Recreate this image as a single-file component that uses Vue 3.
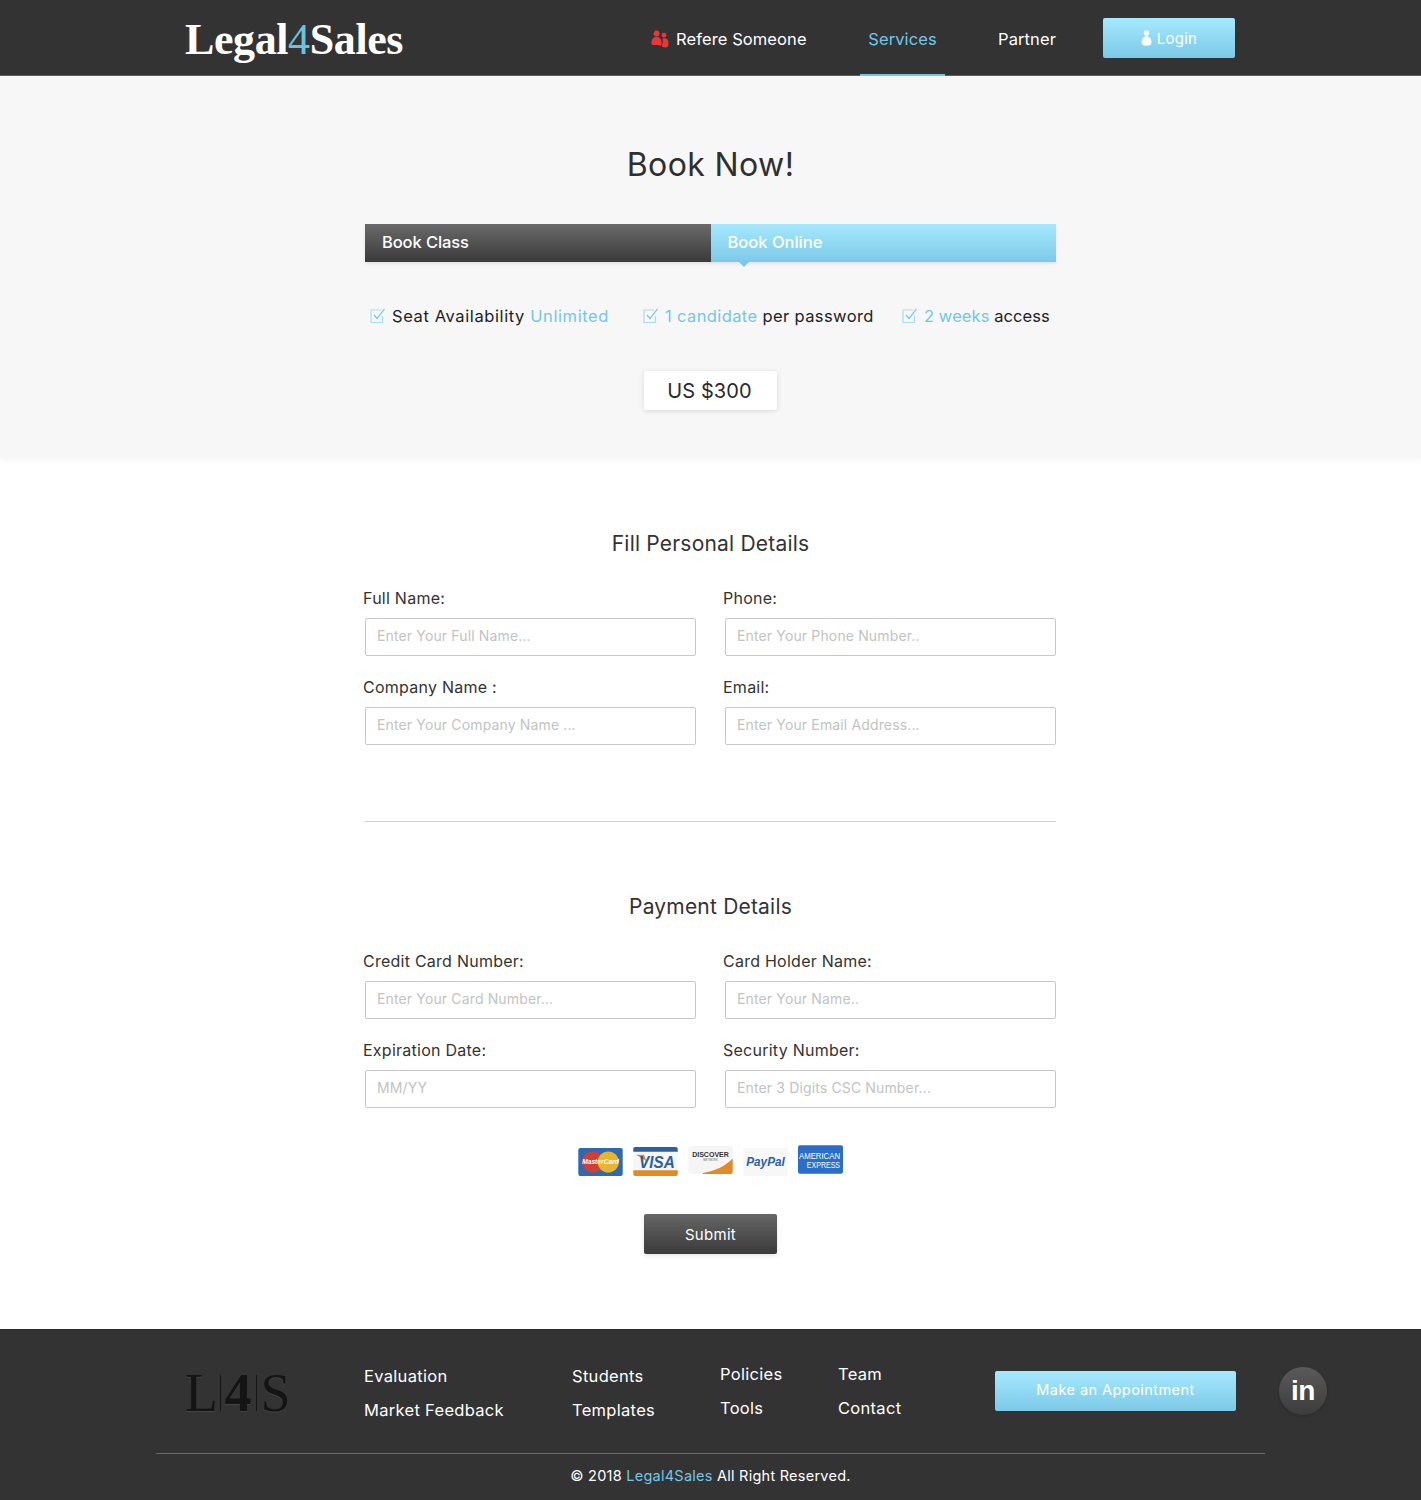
<script setup>
const features = [
  { parts: [['Seat Availability ', false], ['Unlimited', true]], cls: 'f1' },
  { parts: [['1 candidate', true], [' per password', false]], cls: 'f2' },
  { parts: [['2 weeks', true], [' access', false]], cls: 'f3' },
]
const personal = [
  ['Full Name:', 'Enter Your Full Name...'],
  ['Phone:', 'Enter Your Phone Number..'],
  ['Company Name :', 'Enter Your Company Name ...'],
  ['Email:', 'Enter Your Email Address...'],
]
const payment = [
  ['Credit Card Number:', 'Enter Your Card Number...'],
  ['Card Holder Name:', 'Enter Your Name..'],
  ['Expiration Date:', 'MM/YY'],
  ['Security Number:', 'Enter 3 Digits CSC Number...'],
]
const columns = [
  { cls: 'c1', links: ['Evaluation', 'Market Feedback'] },
  { cls: 'c2', links: ['Students', 'Templates'] },
  { cls: 'c3', links: ['Policies', 'Tools'] },
  { cls: 'c4', links: ['Team', 'Contact'] },
]
</script>

<template>
  <div class="page">
    <header class="header">
      <div class="logo">Legal<span class="four">4</span>Sales</div>
      <nav class="nav">
        <a class="refer">
          <svg width="18" height="18" viewBox="0 0 18 18">
            <circle cx="5.6" cy="3.4" r="2.9" fill="#ee3535" />
            <circle cx="13" cy="5.2" r="2.4" fill="#ee3535" />
            <path d="M0.4 13.2C0.4 9.2 2.6 6.8 5.6 6.8S10.6 9.2 10.6 13.2 8.4 15 5.6 15 0.4 15.4 0.4 13.2Z" fill="#ee3535" />
            <path d="M11.5 8.4C13 8 14 8.2 15.2 8.6 17 9.4 17.6 11.6 17.4 14.6 17.3 16.6 16.6 17.4 14.4 17.4 12.4 17.4 11.2 17 10.6 15.8 11.6 14.6 12.2 11.2 11.5 8.4Z" fill="#ee3535" />
          </svg>
          Refere Someone
        </a>
        <a class="services">Services</a>
        <a class="partner">Partner</a>
        <a class="login">
          <svg width="11" height="16" viewBox="0 0 11 16">
            <circle cx="5.5" cy="3" r="2.7" fill="#fff" />
            <path d="M0.6 12.5C0.6 8.6 2.6 6.3 5.5 6.3S10.4 8.6 10.4 12.5C10.4 15 8.6 15.7 5.5 15.7S0.6 15 0.6 12.5Z" fill="#fff" />
          </svg>
          Login
        </a>
      </nav>
    </header>

    <section class="hero">
      <h1 class="title">Book Now!</h1>
      <div class="tabs">
        <div class="tab dark">Book Class</div>
        <div class="tab blue">Book Online</div>
      </div>
      <ul class="features">
        <li v-for="f in features" :key="f.cls" :class="['feature', f.cls]">
          <svg class="check" width="16" height="16" viewBox="0 0 16 16" fill="none">
            <path d="M12.5 8V14.5H1V2H11" stroke="#a9dcf0" stroke-width="1.2" />
            <path d="M4 7L7 10.5L14.5 0.8" stroke="#76c6e6" stroke-width="1.2" />
          </svg>
          <span><template v-for="p in f.parts" :key="p[0]"><span :class="{ hl: p[1] }">{{ p[0] }}</span></template></span>
        </li>
      </ul>
      <div class="price">US $300</div>
    </section>

    <main class="form">
      <h2 class="section-title">Fill Personal Details</h2>
      <div class="grid">
        <label v-for="f in personal" :key="f[0]" class="field">
          <span class="label">{{ f[0] }}</span>
          <input class="input" type="text" :placeholder="f[1]" />
        </label>
      </div>
      <hr class="divider" />
      <h2 class="section-title second">Payment Details</h2>
      <div class="grid">
        <label v-for="f in payment" :key="f[0]" class="field">
          <span class="label">{{ f[0] }}</span>
          <input class="input" type="text" :placeholder="f[1]" />
        </label>
      </div>

      <div class="cards">
        <svg class="card mc" width="45" height="28" viewBox="0 0 46 29">
          <rect width="46" height="29" rx="2" fill="#2f69b4" />
          <circle cx="15" cy="14.5" r="11" fill="#cf3f36" />
          <circle cx="31" cy="14.5" r="11" fill="#e9b52c" />
          <text x="4" y="17" class="t-mc" textLength="38" lengthAdjust="spacingAndGlyphs">MasterCard</text>
        </svg>
        <svg class="card visa" width="45" height="29" viewBox="0 0 46 30">
          <rect width="46" height="30" rx="2" fill="#f6f6f6" />
          <path d="M0 2a2 2 0 0 1 2-2h42a2 2 0 0 1 2 2v3H0Z" fill="#2c5f9e" />
          <path d="M0 24H46V28a2 2 0 0 1-2 2H2a2 2 0 0 1-2-2Z" fill="#e38a26" />
          <path d="M3 8H11L14 15Z" fill="#e38a26" />
          <text x="6" y="21.5" class="t-visa" textLength="37" lengthAdjust="spacingAndGlyphs">VISA</text>
        </svg>
        <svg class="card disc" width="45" height="28" viewBox="0 0 46 29">
          <rect width="46" height="29" rx="2" fill="#f5f5f5" />
          <path d="M15 28C28 26 38 21 46 13V27a2 2 0 0 1-2 2H15Z" fill="#e38a26" />
          <text x="4" y="11.5" class="t-disc" textLength="38" lengthAdjust="spacingAndGlyphs">DISCOVER</text>
          <text x="23" y="15.5" text-anchor="middle" class="t-net">NETWORK</text>
        </svg>
        <svg class="card pp" width="45" height="28" viewBox="0 0 46 29">
          <rect width="46" height="29" rx="2" fill="#f7f7f7" />
          <text x="3" y="19" class="t-pp" textLength="40" lengthAdjust="spacingAndGlyphs">PayPal</text>
        </svg>
        <svg class="card amex" width="45" height="29" viewBox="0 0 46 29">
          <rect width="46" height="29" rx="2" fill="#2a6ec6" />
          <text x="1" y="13.5" class="t-ax" textLength="42" lengthAdjust="spacingAndGlyphs">AMERICAN</text>
          <text x="9" y="23" class="t-ax" textLength="34" lengthAdjust="spacingAndGlyphs">EXPRESS</text>
        </svg>
      </div>

      <button class="submit" type="button">Submit</button>
    </main>

    <footer class="footer">
      <div class="footer-top">
        <div class="mark">
          <span class="m-l">L</span><i class="bar"></i><span class="m-4">4</span><i class="bar"></i><span class="m-s">S</span>
        </div>
        <div v-for="c in columns" :key="c.cls" :class="['col', c.cls]">
          <a v-for="l in c.links" :key="l">{{ l }}</a>
        </div>
        <a class="appointment">Make an Appointment</a>
        <a class="linkedin">in</a>
      </div>
      <div class="copyright">© 2018 <span class="hl">Legal4Sales</span> All Right Reserved.</div>
    </footer>
  </div>
</template>

<style>
html, body { margin: 0; background: #fff; }
</style>

<style scoped>
.page {
  width: 1421px;
  height: 1500px;
  display: flex;
  flex-direction: column;
  font-family: Inter, "Liberation Sans", sans-serif;
  color: #2f2f2f;
  overflow: hidden;
}
.hl { color: #74c6e6; }

/* header */
.header {
  height: 76px;
  box-sizing: border-box;
  flex: none;
  display: flex;
  align-items: center;
  padding-left: 185px;
  background: #333;
  border-bottom: 1px solid #5e5e5e;
  position: relative;
  z-index: 2;
}
.logo {
  width: 466px;
  font-family: "Liberation Serif", serif;
  font-weight: 700;
  font-size: 44px;
  line-height: 76px;
  height: 76px;
  letter-spacing: -0.4px;
  color: #fff;
  margin-top: 5px;
}
.four { color: #6cc1e0; font-weight: 400; }
.nav {
  display: flex;
  align-items: center;
  height: 75px;
  font-size: 16.5px;
  letter-spacing: 0.1px;
  color: #fff;
}
.nav a { display: flex; align-items: center; }
.refer { gap: 7px; width: 209px; height: 76px; margin-top: 1px; box-sizing: border-box; padding-top: 1px; }
.refer svg { margin-top: 1px; }
.services {
  width: 85px;
  height: 75px;
  box-sizing: border-box;
  justify-content: center;
  padding-top: 3px;
  color: #74c6e6;
  margin-top: 1px;
  border-bottom: 2px solid #74c6e6;
}
.partner { margin-left: 53px; width: 105px; padding-top: 2px; }
.login {
  box-sizing: border-box;
  width: 132px;
  height: 40px;
  justify-content: center;
  gap: 5px;
  border-radius: 2px;
  background: linear-gradient(#a6e9ff, #7cc9e7);
  font-size: 15px;
  letter-spacing: 0.25px;
  margin-top: 1px;
}

/* hero */
.hero {
  height: 382px;
  flex: none;
  background: #f7f7f7;
  box-shadow: 0 1px 8px rgba(0, 0, 0, 0.05);
  display: flex;
  flex-direction: column;
  align-items: center;
  position: relative;
  z-index: 1;
}
.title {
  margin: 70px 0 0;
  font-size: 32px;
  line-height: 38px;
  font-weight: 400;
  letter-spacing: 0.4px;
  color: #2f2f2f;
}
.tabs {
  width: 691px;
  display: flex;
  margin-top: 40px;
  box-shadow: 0 2px 3px rgba(0, 0, 0, 0.08);
}
.tab {
  width: 50%;
  height: 38px;
  box-sizing: border-box;
  padding-left: 17px;
  line-height: 36px;
  font-size: 16.5px;
  font-weight: 500;
  letter-spacing: -0.1px;
  color: #fff;
}
.tab.dark { background: linear-gradient(#6a6a6a, #3a3a3a); }
.tab.blue {
  background: linear-gradient(#a6e9ff, #7cc9e7);
  position: relative;
  letter-spacing: 0;
}
.tab.blue::after {
  content: "";
  position: absolute;
  left: 28px;
  top: 38px;
  border-left: 5px solid transparent;
  border-right: 5px solid transparent;
  border-top: 5px solid #7cc9e7;
}
.features {
  list-style: none;
  margin: 43px 0 0;
  padding: 0;
  width: 691px;
  display: flex;
  font-size: 16.5px;
  line-height: 22px;
  color: #222;
}
.feature { display: flex; align-items: center; gap: 6px; white-space: nowrap; }
.f1 { margin-left: 5px; width: 273px; letter-spacing: 0.6px; }
.f2 { width: 259px; letter-spacing: 0.38px; }
.f3 { letter-spacing: 0.08px; }
.check { flex: none; }
.price {
  margin-top: 44px;
  width: 133px;
  height: 39px;
  line-height: 40px;
  text-align: center;
  text-indent: -2px;
  background: #fff;
  border-radius: 2px;
  box-shadow: 0 1px 5px rgba(0, 0, 0, 0.13);
  font-size: 20px;
  letter-spacing: 0.1px;
  color: #2a2a2a;
}

/* form */
.form {
  flex: 1;
  display: flex;
  flex-direction: column;
  align-items: center;
  background: #fff;
}
.section-title {
  margin: 73px 0 0;
  font-size: 21px;
  line-height: 26px;
  font-weight: 400;
  letter-spacing: 0.2px;
  color: #333;
}
.section-title.second { margin-top: 72px; }
.grid {
  width: 691px;
  margin-top: 30px;
  display: grid;
  grid-template-columns: 331px 331px;
  column-gap: 29px;
  row-gap: 20px;
}
.field { display: flex; flex-direction: column; }
.label {
  margin-left: -2px;
  font-size: 16px;
  line-height: 22px;
  letter-spacing: 0.25px;
  color: #333;
  height: 31px;
}
.input {
  height: 38px;
  width: 331px;
  box-sizing: border-box;
  padding: 0 11px 3px;
  border: 1px solid #c9c9c9;
  border-radius: 2px;
  background: #fff;
  font-family: inherit;
  font-size: 14px;
  letter-spacing: 0.14px;
  outline: none;
}
.input::placeholder { color: #c3c3c3; opacity: 1; }
.divider {
  width: 691px;
  box-sizing: border-box;
  margin: 76px 0 0;
  border: 0;
  border-top: 1px solid #d4d4d4;
  height: 1px;
}
.cards {
  display: flex;
  gap: 10px;
  margin-top: 38px;
  height: 31px;
}
.card { display: block; flex: none; }
.mc { margin-top: 2px; }
.visa { margin-top: 1px; }
.pp { margin-top: 2px; }
.amex { margin-top: -1px; }
.t-mc { font: italic 700 7.5px "Liberation Sans", sans-serif; fill: #fff; }
.t-visa { font: italic 700 17px "Liberation Sans", sans-serif; fill: #2c5f9e; }
.t-disc { font: 700 7.5px "Liberation Sans", sans-serif; fill: #333; }
.t-net { font: 400 3px "Liberation Sans", sans-serif; fill: #666; }
.t-pp { font: italic 700 13px "Liberation Sans", sans-serif; fill: #2b5fa8; }
.t-ax { font: 400 8.5px "Liberation Sans", sans-serif; fill: #fff; }
.submit {
  margin-top: 37px;
  width: 133px;
  height: 40px;
  border: 0;
  border-radius: 2px;
  background: linear-gradient(#666, #3a3a3a);
  box-shadow: 0 2px 4px rgba(0, 0, 0, 0.1);
  color: #fff;
  font-family: inherit;
  font-size: 15px;
  letter-spacing: 0.3px;
  padding: 0;
}

/* footer */
.footer {
  height: 171px;
  flex: none;
  box-sizing: border-box;
  background: #333;
  border-top: 1px solid #262626;
  color: #fff;
}
.footer-top {
  margin: 0 156px;
  height: 124px;
  box-sizing: border-box;
  padding-left: 29px;
  border-bottom: 1px solid #6a6a6a;
  display: flex;
}
.mark {
  width: 179px;
  height: 36px;
  flex: none;
  margin-top: 45px;
  display: flex;
  gap: 4px;
  font-family: "Liberation Serif", serif;
  font-size: 54px;
  line-height: 36px;
  color: #141414;
  text-shadow: 0 1px 0 rgba(255, 255, 255, 0.08);
}
.m-l { width: 30.5px; }
.m-4 { width: 27px; font-weight: 700; }
.m-s { width: 30px; }
.bar { width: 1px; height: 36px; background: #141414; flex: none; }
.col {
  flex: none;
  display: flex;
  flex-direction: column;
  gap: 12px;
  font-size: 16.5px;
  line-height: 22px;
  letter-spacing: 0.3px;
  padding-top: 35px;
}
.c1 { width: 208px; }
.c2 { width: 148px; }
.c3 { width: 118px; padding-top: 33px; }
.c4 { width: 157px; padding-top: 33px; }
.appointment {
  flex: none;
  width: 241px;
  height: 40px;
  margin-top: 41px;
  text-align: center;
  line-height: 38px;
  border-radius: 2px;
  background: linear-gradient(#a6e9ff, #7cc9e7);
  font-size: 14.5px;
  letter-spacing: 0.45px;
}
.linkedin {
  flex: none;
  width: 48px;
  height: 48px;
  margin: 37px 0 0 43px;
  border-radius: 50%;
  background: linear-gradient(#5a5a5a, #3c3c3c);
  box-shadow: 0 1px 3px rgba(0, 0, 0, 0.2);
  text-align: center;
  line-height: 48px;
  font-family: "Liberation Sans", sans-serif;
  font-weight: 700;
  font-size: 28px;
  letter-spacing: -0.5px;
}
.copyright {
  text-align: center;
  margin-top: 11px;
  font-size: 14.5px;
  line-height: 22px;
  letter-spacing: 0.25px;
}
</style>
